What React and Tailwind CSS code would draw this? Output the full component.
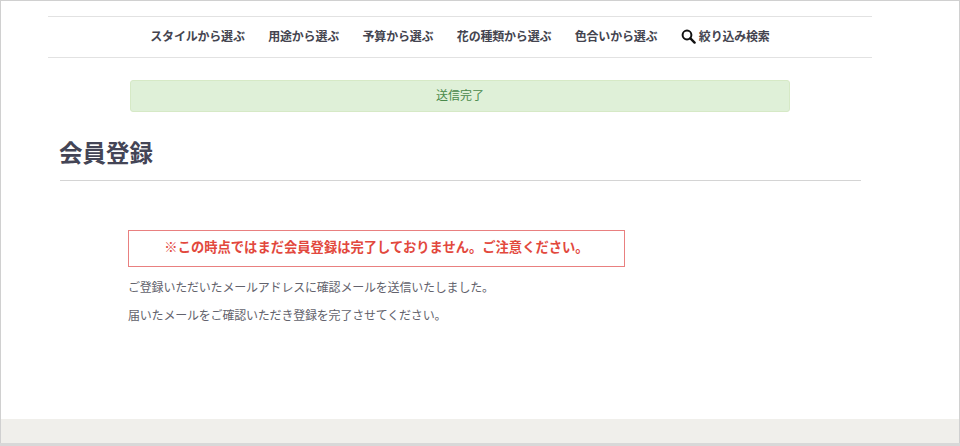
const navItems = ["スタイルから選ぶ", "用途から選ぶ", "予算から選ぶ", "花の種類から選ぶ", "色合いから選ぶ"];

function SearchIcon() {
  return (
    <svg width="15" height="15" viewBox="0 0 15 15" fill="none" stroke="#111" strokeWidth="2" strokeLinecap="round">
      <circle cx="6" cy="6" r="4.4" />
      <path d="M9.4 9.4 L13.6 13.6" strokeWidth="2.4" />
    </svg>
  );
}

export default function App() {
  return (
    <div className="h-[446px] bg-[#d8d8d8] font-['Noto_Sans_CJK_JP',sans-serif] overflow-hidden">
      <div className="h-[443px] flex flex-col bg-white border-x border-t border-[#d0d0d0]">
        <div className="flex-1 pt-[15px]">
          <nav className="ml-[47px] w-[824px] h-[42px] flex items-center justify-center gap-[23.5px] border-y border-[#e2e2e2] text-[12px] tracking-[-0.2px] font-bold text-[#44444f]">
            {navItems.map((item) => (
              <a key={item} href="#" className="-mt-[2px]">{item}</a>
            ))}
            <a href="#" className="flex items-center gap-[3px] -mt-[2px]">
              <SearchIcon />
              絞り込み検索
            </a>
          </nav>

          <div className="ml-[129px] mt-[22px] w-[660px] h-[32px] flex items-center justify-center rounded-[3px] bg-[#dff0d8] border border-[#d6e9c6] text-[12px] text-[#4a8a4b]">
            <span className="-mt-[2px]">送信完了</span>
          </div>

          <div className="ml-[59px] w-[801px] mt-[24px] h-[45px] border-b border-[#d4d4d4]">
            <h1 className="-ml-px text-[23.5px] leading-[32px] font-bold text-[#444556]">会員登録</h1>
          </div>

          <div className="ml-[127px] mt-[49px]">
            <div className="w-[497px] h-[37px] flex items-center justify-center border border-[#e98080] text-[13.3px] font-bold text-[#e2483d]">
              <span className="-mt-[4px]">※この時点ではまだ会員登録は完了しておりません。ご注意ください。</span>
            </div>
            <p className="mt-[11px] text-[12px] tracking-[-0.2px] leading-[18px] text-[#62626c]">ご登録いただいたメールアドレスに確認メールを送信いたしました。</p>
            <p className="mt-[10px] text-[12px] tracking-[-0.2px] leading-[18px] text-[#62626c]">届いたメールをご確認いただき登録を完了させてください。</p>
          </div>
        </div>
        <footer className="h-[24px] bg-[#f0efeb]"></footer>
      </div>
    </div>
  );
}
